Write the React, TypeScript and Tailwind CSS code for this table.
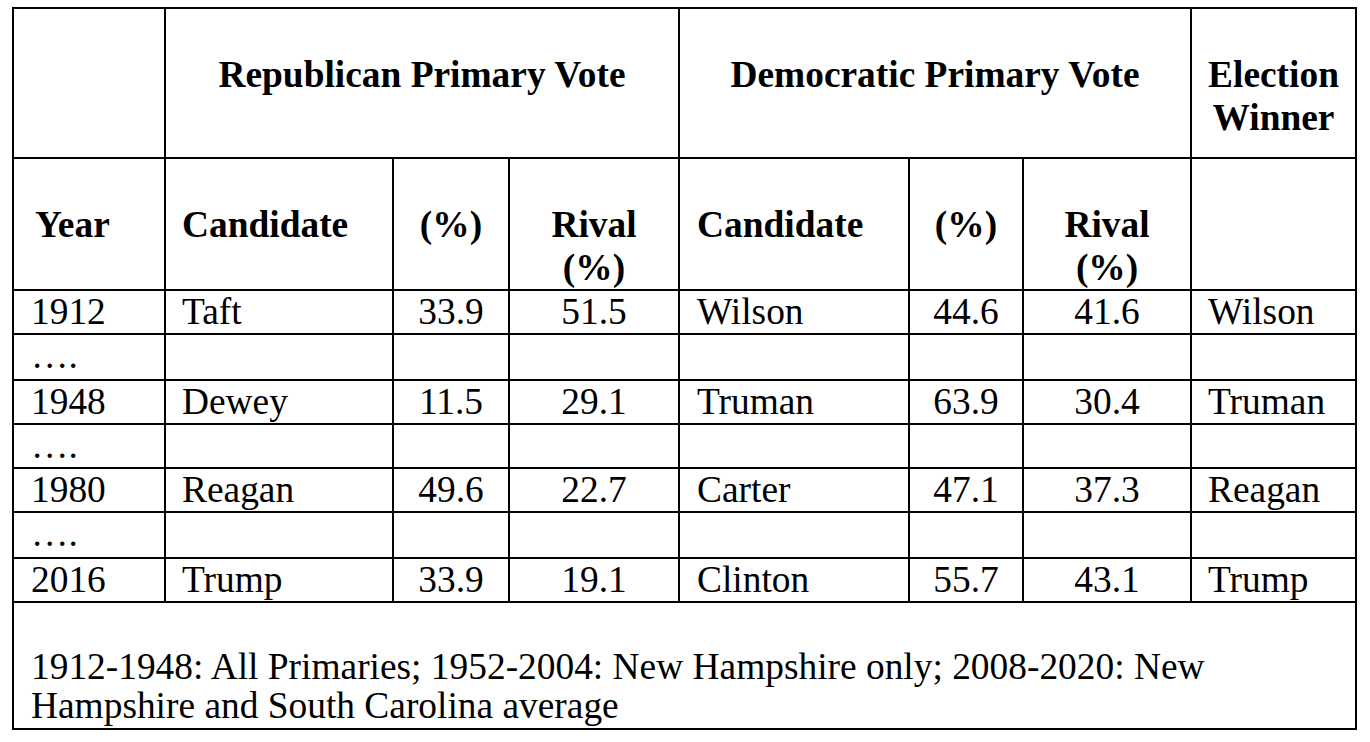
import { Fragment } from "react";

type ResultRow = {
  year: string;
  rep: string;
  repPct: string;
  repRival: string;
  dem: string;
  demPct: string;
  demRival: string;
  winner: string;
};

const RESULTS: ResultRow[] = [
  { year: "1912", rep: "Taft", repPct: "33.9", repRival: "51.5", dem: "Wilson", demPct: "44.6", demRival: "41.6", winner: "Wilson" },
  { year: "1948", rep: "Dewey", repPct: "11.5", repRival: "29.1", dem: "Truman", demPct: "63.9", demRival: "30.4", winner: "Truman" },
  { year: "1980", rep: "Reagan", repPct: "49.6", repRival: "22.7", dem: "Carter", demPct: "47.1", demRival: "37.3", winner: "Reagan" },
  { year: "2016", rep: "Trump", repPct: "33.9", repRival: "19.1", dem: "Clinton", demPct: "55.7", demRival: "43.1", winner: "Trump" },
];

// heights of the "…." spacer rows between the data rows
const GAP_HEIGHTS = ["h-[46px]", "h-[44px]", "h-[46px]"];

const cell = "border-r-2 border-b-2 border-black p-0 align-top";
const head = `${cell} font-bold leading-[43px] pt-[44px]`;
const body = `${cell} leading-[42px]`;

export default function App() {
  return (
    <div className="min-h-screen bg-white pl-[12px] pt-[7px] text-black font-[family-name:'Liberation_Serif','Times_New_Roman',serif] text-[37.4px]">
      <table className="table-fixed border-separate border-spacing-0 border-l-2 border-t-2 border-black w-[1345px]">
        <colgroup>
          <col className="w-[152px]" />
          <col className="w-[228px]" />
          <col className="w-[116px]" />
          <col className="w-[170px]" />
          <col className="w-[230px]" />
          <col className="w-[114px]" />
          <col className="w-[168px]" />
          <col className="w-[165px]" />
        </colgroup>
        <thead>
          <tr className="h-[150px]">
            <th className={head}></th>
            <th colSpan={3} className={`${head} text-center`}>
              Republican Primary Vote
            </th>
            <th colSpan={3} className={`${head} text-center`}>
              Democratic Primary Vote
            </th>
            <th className={`${head} text-center`}>
              Election
              <br />
              Winner
            </th>
          </tr>
          <tr className="h-[130px]">
            <th className={`${head} text-left pl-[21px]`}>Year</th>
            <th className={`${head} text-left pl-4`}>Candidate</th>
            <th className={`${head} text-center`}>(%)</th>
            <th className={`${head} text-center`}>
              Rival
              <br />
              (%)
            </th>
            <th className={`${head} text-left pl-[17px]`}>Candidate</th>
            <th className={`${head} text-center`}>(%)</th>
            <th className={`${head} text-center`}>
              Rival
              <br />
              (%)
            </th>
            <th className={head}></th>
          </tr>
        </thead>
        <tbody>
          {RESULTS.map((r, i) => (
            <Fragment key={r.year}>
              <tr className="h-[44px]">
                <td className={`${body} pl-[17px]`}>{r.year}</td>
                <td className={`${body} pl-4`}>{r.rep}</td>
                <td className={`${body} text-center`}>{r.repPct}</td>
                <td className={`${body} text-center`}>{r.repRival}</td>
                <td className={`${body} pl-[17px]`}>{r.dem}</td>
                <td className={`${body} text-center`}>{r.demPct}</td>
                <td className={`${body} text-center`}>{r.demRival}</td>
                <td className={`${body} pl-4`}>{r.winner}</td>
              </tr>
              {i < GAP_HEIGHTS.length && (
                <tr className={GAP_HEIGHTS[i]}>
                  <td className={`${body} pl-[17px]`}>….</td>
                  <td className={body}></td>
                  <td className={body}></td>
                  <td className={body}></td>
                  <td className={body}></td>
                  <td className={body}></td>
                  <td className={body}></td>
                  <td className={body}></td>
                </tr>
              )}
            </Fragment>
          ))}
          <tr className="h-[127px]">
            <td colSpan={8} className={`${cell} pl-[17px] pt-[44px] leading-[39px]`}>
              1912-1948: All Primaries; 1952-2004: New Hampshire only; 2008-2020: New
              <br />
              Hampshire and South Carolina average
            </td>
          </tr>
        </tbody>
      </table>
    </div>
  );
}
